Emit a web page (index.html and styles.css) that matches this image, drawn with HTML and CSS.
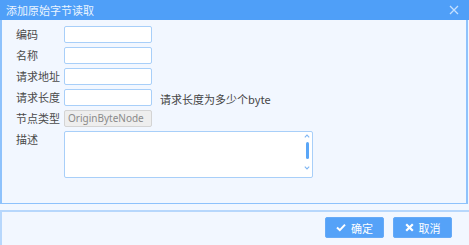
FILE: index.html
```html
<!DOCTYPE html>
<html>
<head>
<meta charset="utf-8">
<link rel="stylesheet" href="styles.css">
</head>
<body>
<div class="dialog">
  <div class="titlebar">
    <span class="title">添加原始字节读取</span>
    <svg class="close" width="10" height="10" viewBox="0 0 10 10"><path d="M1 1L9 9M9 1L1 9" stroke="#c4e0ff" stroke-width="1.3" fill="none"/></svg>
  </div>
  <div class="content">
    <div class="form">
      <label class="lbl">编码</label>
      <div class="field"><span class="input"></span></div>
      <label class="lbl">名称</label>
      <div class="field"><span class="input"></span></div>
      <label class="lbl">请求地址</label>
      <div class="field"><span class="input"></span></div>
      <label class="lbl">请求长度</label>
      <div class="field"><span class="input"></span><span class="hint">请求长度为多少个byte</span></div>
      <label class="lbl">节点类型</label>
      <div class="field"><span class="input disabled">OriginByteNode</span></div>
      <label class="lbl top">描述</label>
      <div class="field">
        <div class="textarea">
          <div class="scroll">
            <svg width="6" height="4" viewBox="0 0 6 4"><path d="M0.8 3.3L3 1L5.2 3.3" stroke="#7fb6f3" stroke-width="1.1" fill="none"/></svg>
            <span class="thumb"></span>
            <svg width="6" height="4" viewBox="0 0 6 4"><path d="M0.8 0.7L3 3L5.2 0.7" stroke="#7fb6f3" stroke-width="1.1" fill="none"/></svg>
          </div>
        </div>
      </div>
    </div>
  </div>
  <div class="spacer"></div>
  <div class="footer">
    <button class="btn"><svg width="10" height="9" viewBox="0 0 10 9"><path d="M1 4.6L3.8 7.2L9 1.6" stroke="#fff" stroke-width="2" fill="none"/></svg>确定</button>
    <button class="btn"><svg width="9" height="9" viewBox="0 0 9 9"><path d="M1.2 1.2L7.8 7.8M7.8 1.2L1.2 7.8" stroke="#fff" stroke-width="2.2" fill="none"/></svg>取消</button>
  </div>
</div>
</body>
</html>
```
FILE: styles.css
```css
html, body {
  margin: 0;
  padding: 0;
  background: #ffffff;
}
.dialog {
  width: 469px;
  height: 245px;
  display: flex;
  flex-direction: column;
  background: #f2f7ff;
  font-family: "Noto Sans CJK SC", "Noto Sans", sans-serif;
  font-size: 11px;
  color: #333;
}
.titlebar {
  height: 20px;
  background: #4f9ff8;
  display: flex;
  align-items: center;
  justify-content: space-between;
  padding: 0 10px 0 6px;
  flex: none;
}
.title {
  color: #eaf4ff;
  font-size: 11px;
  line-height: 20px;
}
.close {
  display: block;
}
.content {
  height: 184px;
  border-left: 2px solid #8ec2fc;
  border-right: 2px solid #8ec2fc;
  border-bottom: 1px solid #8ec2fc;
  margin-right: 1px;
  flex: none;
  padding-top: 6px;
  box-sizing: border-box;
}
.form {
  display: grid;
  grid-template-columns: 48px 1fr;
  grid-auto-rows: 17px;
  row-gap: 4px;
  padding-left: 14px;
}
.lbl {
  line-height: 17px;
  color: #4a4a4a;
}
.lbl.top {
  align-self: start;
}
.field {
  display: flex;
  align-items: center;
  gap: 8px;
}
.input {
  width: 88px;
  height: 17px;
  box-sizing: border-box;
  background: #fff;
  border: 1px solid #a8cff9;
  border-radius: 2px;
}
.input.disabled {
  background: #eeeeee;
  border-color: #d4d4d4;
  color: #8a8a8a;
  line-height: 15px;
  padding-left: 3px;
  font-size: 10px;
  font-family: "Noto Sans", sans-serif;
}
.hint {
  color: #444;
  margin-top: 2px;
}
.textarea {
  width: 249px;
  height: 47px;
  box-sizing: border-box;
  background: #fff;
  border: 1px solid #a8cff9;
  border-radius: 2px;
  display: flex;
  justify-content: flex-end;
  align-self: flex-start;
}
.scroll {
  width: 6px;
  margin-right: 2px;
  display: flex;
  flex-direction: column;
  align-items: center;
  padding-top: 2px;
}
.scroll svg {
  display: block;
}
.thumb {
  width: 3px;
  height: 17px;
  border-radius: 2px;
  background: #5aa6f7;
  margin: 4px 0 7px;
}
.spacer {
  height: 6px;
  flex: none;
}
.footer {
  flex: 1;
  border-top: 2px solid #b7d7fc;
  border-left: 2px solid #b7d7fc;
  display: flex;
  justify-content: flex-end;
  align-items: flex-start;
  gap: 9px;
  padding: 5px 17px 0 0;
}
.btn {
  width: 59px;
  height: 21px;
  background: #55a2f8;
  border: 1px solid #66aaf7;
  border-radius: 2px;
  color: #fff;
  font-family: "Noto Sans CJK SC", sans-serif;
  font-size: 11px;
  display: flex;
  align-items: center;
  justify-content: center;
  gap: 5px;
  padding: 0;
}
.btn svg {
  display: block;
}
```
